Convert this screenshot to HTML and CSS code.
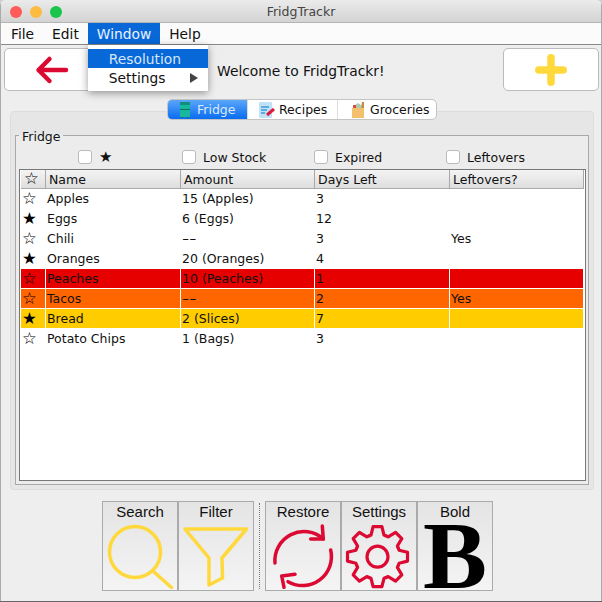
FILE: index.html
```html
<!DOCTYPE html>
<html lang="en">
<head>
    <meta charset="UTF-8">
    <title>FridgTrackr</title>
    <link rel="stylesheet" href="styles.css">
</head>
<body>
<div class="window">
    <div class="titlebar">
        <span class="light red"></span>
        <span class="light amber"></span>
        <span class="light green"></span>
        <span class="title">FridgTrackr</span>
    </div>
    <div class="menubar">
        <div class="menu-item">File</div>
        <div class="menu-item">Edit</div>
        <div class="menu-item open">Window
            <div class="dropdown">
                <div class="drop-item active">Resolution</div>
                <div class="drop-item">Settings<span class="arrow"></span></div>
            </div>
        </div>
        <div class="menu-item">Help</div>
    </div>

    <div class="topbar">
        <button class="big-btn">
            <svg width="36" height="30" viewBox="0 0 36 30"><path d="M32 15H5M15.5 4L4.5 15l11 11" fill="none" stroke="#dc0a32" stroke-width="4.5" stroke-linecap="round" stroke-linejoin="round"/></svg>
        </button>
        <div class="welcome">Welcome to FridgTrackr!</div>
        <button class="big-btn">
            <svg width="34" height="34" viewBox="0 0 34 34"><path d="M17 4.8v24.4M4.8 17h24.4" fill="none" stroke="#ffd83c" stroke-width="7.5" stroke-linecap="round"/></svg>
        </button>
    </div>

    <div class="tabbed">
        <div class="tabs">
            <div class="tab tab-fridge selected">
                <svg width="14" height="18" viewBox="0 0 14 18"><rect x="2" y="1" width="10" height="15" fill="#17b89c"/><rect x="2" y="1" width="10" height="3" fill="#0f8f7c"/><rect x="2" y="8" width="10" height="1" fill="#0b6f62"/><rect x="3" y="16" width="2" height="1" fill="#0b6f62"/><rect x="9" y="16" width="2" height="1" fill="#0b6f62"/></svg>
                Fridge
            </div>
            <div class="tab tab-recipes">
                <svg width="18" height="18" viewBox="0 0 18 18"><rect x="1" y="1" width="13" height="16" rx="1" fill="#bfe2f7"/><path d="M3 6h8M3 9h6M3 12h4" stroke="#3d9ad9" stroke-width="1.5"/><path d="M9 14l7-6" stroke="#dc1a3c" stroke-width="3"/></svg>
                Recipes
            </div>
            <div class="tab tab-groceries">
                <svg width="14" height="18" viewBox="0 0 14 18"><path d="M1 7h12v10H1z" fill="#f3c06e"/><path d="M4 7V4l3-2 3 2v3z" fill="#a8cdb4"/><path d="M2 7V4h3v3z" fill="#dc4a3c"/><path d="M10 7l1-6h2v6z" fill="#c98a3c"/></svg>
                Groceries
            </div>
        </div>
        <div class="tab-panel">
            <fieldset class="group">
                <legend>Fridge</legend>
                <div class="filters">
                    <label class="filter"><span class="check"></span><span class="star-label">★</span></label>
                    <label class="filter"><span class="check"></span>Low Stock</label>
                    <label class="filter"><span class="check"></span>Expired</label>
                    <label class="filter"><span class="check"></span>Leftovers</label>
                </div>
                <div class="table-box">
                    <table>
                        <thead>
                            <tr><th class="star">☆</th><th>Name</th><th>Amount</th><th>Days Left</th><th>Leftovers?</th></tr>
                        </thead>
                        <tbody>
                            <tr><td class="star">☆</td><td>Apples</td><td>15 (Apples)</td><td>3</td><td></td></tr>
                            <tr><td class="star">★</td><td>Eggs</td><td>6 (Eggs)</td><td>12</td><td></td></tr>
                            <tr><td class="star">☆</td><td>Chili</td><td><span class="dash">--</span></td><td>3</td><td>Yes</td></tr>
                            <tr><td class="star">★</td><td>Oranges</td><td>20 (Oranges)</td><td>4</td><td></td></tr>
                            <tr class="expired"><td class="star">☆</td><td>Peaches</td><td>10 (Peaches)</td><td>1</td><td></td></tr>
                            <tr class="soon"><td class="star">☆</td><td>Tacos</td><td><span class="dash">--</span></td><td>2</td><td>Yes</td></tr>
                            <tr class="low"><td class="star">★</td><td>Bread</td><td>2 (Slices)</td><td>7</td><td></td></tr>
                            <tr><td class="star">☆</td><td>Potato Chips</td><td>1 (Bags)</td><td>3</td><td></td></tr>
                        </tbody>
                    </table>
                </div>
            </fieldset>
        </div>
    </div>

    <div class="toolbar">
        <button class="tool">Search
            <svg width="74" height="66" viewBox="0 0 74 66"><circle cx="32" cy="29" r="25.5" fill="none" stroke="#ffd83c" stroke-width="3.5"/><path d="M51 49l17.5 15.5" stroke="#ffd83c" stroke-width="3.5" stroke-linecap="round"/></svg>
        </button>
        <button class="tool">Filter
            <svg width="74" height="66" viewBox="0 0 74 66"><path d="M6 6h61.5L43 35l.5 20L30 62V35z" fill="none" stroke="#ffd83c" stroke-width="3.5" stroke-linejoin="round"/></svg>
        </button>
        <div class="tool-sep"></div>
        <button class="tool">Restore
            <svg width="74" height="66" viewBox="0 0 74 66"><g fill="none" stroke="#dc0a32" stroke-width="3.5" stroke-linecap="round" stroke-linejoin="round"><path d="M9 40A29 29 0 0 1 57.3 16M64.7 27A29 29 0 0 1 22 58.7"/><path d="M56.3 3l1 13-12.6 0M18 64.3L15.7 53 29 51.3"/></g></svg>
        </button>
        <button class="tool">Settings
            <svg width="74" height="66" viewBox="0 0 74 66">
                <defs><path id="tooth" d="M-8.6-20.8L-6.5-21.6-4.4-30H4.4L6.5-21.6 8.6-20.8"/></defs>
                <g transform="translate(35.5 33.7)" fill="none" stroke="#dc0a32" stroke-width="3.2" stroke-linejoin="round" stroke-linecap="round">
                    <circle r="10.5"/>
                    <use href="#tooth"/>
                    <use href="#tooth" transform="rotate(45)"/>
                    <use href="#tooth" transform="rotate(90)"/>
                    <use href="#tooth" transform="rotate(135)"/>
                    <use href="#tooth" transform="rotate(180)"/>
                    <use href="#tooth" transform="rotate(225)"/>
                    <use href="#tooth" transform="rotate(270)"/>
                    <use href="#tooth" transform="rotate(315)"/>
                </g>
            </svg>
        </button>
        <button class="tool">Bold
            <svg class="bold-icon" width="74" height="66" viewBox="0 0 74 66"><text class="bold-b" x="37" y="65" text-anchor="middle">B</text></svg>
        </button>
    </div>
</div>
</body>
</html>
```

FILE: styles.css
```css
* {
    box-sizing: border-box;
}
html, body {
    margin: 0;
    padding: 0;
}
body {
    width: 602px;
    height: 602px;
    overflow: hidden;
    background-color: #cfcfcf;
    font-family: "DejaVu Sans", sans-serif;
    color: #111;
}
.window {
    position: relative;
    height: 602px;
    background-color: #eeeeee;
    border-radius: 6px 6px 0 0;
    border-bottom: 1px solid #666;
    overflow: hidden;
}
.window::after {
    content: "";
    position: absolute;
    top: 0;
    bottom: 0;
    left: 0;
    right: 0;
    border-left: 1px solid #aaa;
    border-right: 1px solid #aaa;
    pointer-events: none;
}
.titlebar {
    height: 23px;
    padding: 1px 0 0 10px;
    display: flex;
    align-items: center;
    gap: 8px;
    position: relative;
    background: linear-gradient(#ebebeb, #d3d3d3);
    border-bottom: 1px solid #b4b4b4;
}
.light {
    width: 12px;
    height: 12px;
    border-radius: 50%;
}
.red { background-color: #fc5b57; }
.amber { background-color: #fdbb40; }
.green { background-color: #19c54a; }
.title {
    position: absolute;
    left: 0;
    right: 0;
    text-align: center;
    font-size: 12.5px;
    color: #444;
}
.menubar {
    height: 22px;
    display: flex;
    padding-left: 2px;
    background-color: #fbfbfb;
    border-bottom: 1px solid #888;
    font-size: 13.8px;
}
.menu-item {
    position: relative;
    height: 21px;
    padding: 0 9px;
    line-height: 23px;
}
.menu-item.open {
    background-color: #0868d8;
    color: #e8f2ff;
}
.dropdown {
    position: absolute;
    top: 22px;
    left: 0;
    width: 120px;
    height: 46px;
    padding-top: 4px;
    background-color: #fff;
    color: #111;
    box-shadow: 0 2px 8px rgba(0, 0, 0, 0.4);
    z-index: 10;
}
.drop-item {
    height: 19px;
    line-height: 21px;
    padding-left: 21px;
    position: relative;
}
.drop-item.active {
    background-color: #0868d8;
    color: #d5e6fb;
}
.arrow {
    position: absolute;
    right: 10px;
    top: 5px;
    border-left: 8px solid #444;
    border-top: 5px solid transparent;
    border-bottom: 5px solid transparent;
}
.topbar {
    height: 43px;
    margin-top: 3px;
    padding: 0 3px 0 4px;
    display: flex;
    align-items: center;
}
.big-btn {
    width: 96px;
    height: 43px;
    padding: 0;
    display: flex;
    align-items: center;
    justify-content: center;
    background-color: #fff;
    border: 1px solid #bbb;
    border-radius: 5px;
}
.welcome {
    flex: 1;
    padding: 2px 0 0 117px;
    font-size: 13.85px;
}
.tabbed {
    position: relative;
    margin: 8px 8px 0 10px;
}
.tabs {
    position: absolute;
    top: 0;
    left: 157px;
    height: 21px;
    display: flex;
    background-color: #fff;
    border: 1px solid #c4c4c4;
    border-radius: 5px;
    font-size: 12.5px;
    overflow: hidden;
    z-index: 2;
}
.tab {
    display: flex;
    align-items: center;
    border-left: 1px solid #ddd;
}
.tab-fridge { width: 79px; padding-left: 10px; gap: 5px; border-left: 0; }
.tab-recipes { width: 90px; padding-left: 10px; gap: 3px; }
.tab-groceries { width: 99px; padding-left: 13px; gap: 5px; }
.tab.selected {
    background: linear-gradient(#5aa6fa, #0a6cf0);
    color: #dce9fb;
}
.tab-panel {
    position: absolute;
    top: 12px;
    left: 0;
    right: 0;
    height: 379px;
    padding: 15px 4px 4px 4px;
    background-color: #e6e6e6;
    border: 1px solid #dcdcdc;
    border-radius: 4px;
}
.group {
    height: 100%;
    margin: 0;
    padding: 0 2px 0 3px;
    border: 1px solid #a8a8a8;
    background-color: #ececec;
}
.group legend {
    padding: 3px 3px 0;
    font-size: 12.5px;
    line-height: 14px;
}
.filters {
    height: 25px;
    display: grid;
    grid-template-columns: 104px 132px 132px 130px;
    padding: 1px 0 0 59px;
    align-items: center;
    font-size: 12.5px;
}
.filter {
    display: flex;
    align-items: center;
    gap: 7px;
}
.star-label {
    font-size: 15px;
}
.check {
    width: 14px;
    height: 14px;
    background-color: #fff;
    border: 1px solid #bbb;
    border-radius: 3px;
}
.table-box {
    height: 312px;
    padding: 0 1px;
    background-color: #fff;
    border: 1px solid #777;
}
table {
    width: 563px;
    table-layout: fixed;
    border-collapse: separate;
    border-spacing: 0;
    font-size: 12.5px;
}
th {
    height: 19px;
    padding: 0 0 0 3px;
    text-align: left;
    font-weight: normal;
    background: linear-gradient(#f4f4f4, #dedede);
    border-right: 1px solid #a8a8a8;
    border-bottom: 1px solid #aaa;
}
th:first-child { width: 25px; }
th:nth-child(2) { width: 135px; }
th:nth-child(3) { width: 134px; }
th:nth-child(4) { width: 135px; }
td {
    height: 20px;
    padding: 0 0 0 1px;
    border-right: 1px solid #fff;
    border-bottom: 1px solid #fff;
}
th.star, td.star {
    font-size: 16.5px;
    line-height: 16px;
    color: #000;
}
.dash {
    display: inline-block;
    transform: scaleX(1.6);
    transform-origin: left center;
}
.expired td { background-color: #e60000; }
.soon td { background-color: #ff6600; }
.low td { background-color: #ffcc00; }
.toolbar {
    position: absolute;
    top: 501px;
    left: 102px;
    display: flex;
}
.tool {
    width: 76px;
    height: 90px;
    padding: 1px 0 0;
    display: flex;
    flex-direction: column;
    align-items: center;
    font-family: "Liberation Sans", sans-serif;
    font-size: 15px;
    color: #111;
    background: linear-gradient(#e4e4e4, #f4f4f4);
    border: 1px solid #aaa;
}
.tool svg {
    margin-top: 3px;
}
.tool svg.bold-icon {
    overflow: visible;
}
.tool-sep {
    width: 1px;
    margin: 2px 5px;
    border-left: 1px dotted #777;
}
.bold-b {
    font-family: "Liberation Serif", serif;
    font-weight: bold;
    font-size: 96px;
    fill: #000;
}
```
